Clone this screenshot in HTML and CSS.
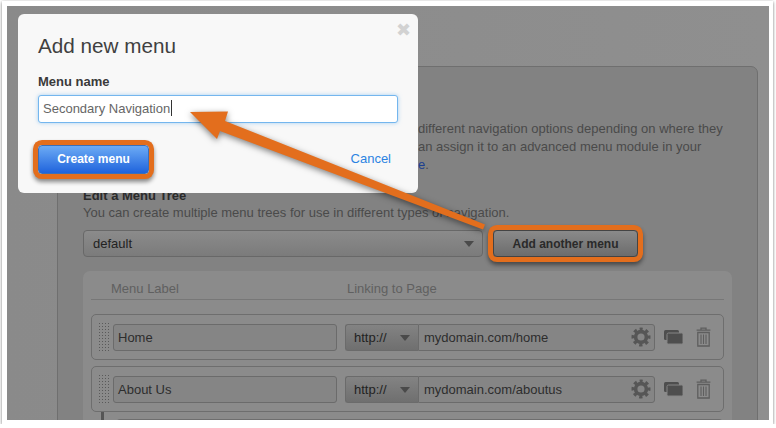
FILE: index.html
```html
<!DOCTYPE html>
<html>
<head>
  <title>Add new menu</title>
  <link rel="stylesheet" href="styles.css">
</head>
<body>
  <svg class="defs" width="0" height="0">
    <symbol id="gear" viewBox="0 0 20 20">
      <circle cx="10" cy="10" r="5.4" fill="none" stroke="#565656" stroke-width="3.6"/>
      <circle cx="10" cy="10" r="8" fill="none" stroke="#565656" stroke-width="3" stroke-dasharray="3.3 2.98" stroke-dashoffset="1.65" transform="rotate(-90 10 10)"/>
    </symbol>
    <symbol id="windows" viewBox="0 0 19 15">
      <rect x="0" y="0" width="15" height="10" rx="1.5" fill="#4e4e4e"/>
      <rect x="3" y="3" width="16" height="11" rx="1.5" fill="#4e4e4e" stroke="#858585"/>
    </symbol>
    <symbol id="trash" viewBox="0 0 15 20">
      <path d="M5 2.5V1.2h5v1.3M.6 3.2h13.8M1.8 5.5h11.4V19H1.8z" fill="none" stroke="#5e5e5e" stroke-width="1.3"/>
      <path d="M5 7.5v9.5M7.5 7.5v9.5M10 7.5v9.5" fill="none" stroke="#5e5e5e" stroke-width="1.1"/>
    </symbol>
  </svg>

  <div class="shot">
    <div class="screen">
      <div class="panel">
        <div class="intro">
          <div class="intro-line">different navigation options depending on where they</div>
          <div class="intro-line">an assign it to an advanced menu module in your</div>
          <div class="intro-line"><a class="doc-link" href="#">e</a>.</div>
        </div>

        <h3 class="tree-title">Edit a Menu Tree</h3>
        <p class="tree-help">You can create multiple menu trees for use in different types of navigation.</p>

        <div class="tree-controls">
          <div class="tree-select">default<span class="tri"></span></div>
          <button class="add-btn">Add another menu</button>
        </div>

        <div class="tree-box">
          <div class="tree-head">
            <span class="head-label">Menu Label</span>
            <span>Linking to Page</span>
          </div>

          <div class="tree-row">
            <span class="grip"></span>
            <div class="field label-field">Home</div>
            <div class="url-group">
              <div class="proto">http://<span class="tri"></span></div>
              <div class="url-field">mydomain.com/home<svg class="gear"><use href="#gear"/></svg></div>
            </div>
            <svg class="win-icon"><use href="#windows"/></svg>
            <svg class="trash-icon"><use href="#trash"/></svg>
          </div>

          <div class="tree-row">
            <span class="grip"></span>
            <div class="field label-field">About Us</div>
            <div class="url-group">
              <div class="proto">http://<span class="tri"></span></div>
              <div class="url-field">mydomain.com/aboutus<svg class="gear"><use href="#gear"/></svg></div>
            </div>
            <svg class="win-icon"><use href="#windows"/></svg>
            <svg class="trash-icon"><use href="#trash"/></svg>
          </div>

          <div class="tree-child">
            <div class="tree-row"></div>
          </div>
        </div>
      </div>

      <div class="modal">
        <span class="close">&#10006;</span>
        <h2 class="modal-title">Add new menu</h2>
        <label class="modal-label">Menu name</label>
        <div class="name-field">Secondary Navigation<span class="caret"></span></div>
        <div class="modal-foot">
          <button class="create-btn">Create menu</button>
          <a class="cancel" href="#">Cancel</a>
        </div>
      </div>
    </div>

    <svg class="arrow" width="776" height="428" viewBox="0 0 776 428">
      <polygon points="190,112 228,111.5 225,121 485,224.5 483,229.5 220,131 217,139" fill="#e36e1d"/>
    </svg>
  </div>
</body>
</html>
```

FILE: styles.css
```css
body {
  margin: 0;
  background-color: #fff;
  font-family: "Liberation Sans", Arial, sans-serif;
  font-size: 13px;
  color: #4a4a4a;
}

.defs {
  position: absolute;
}

.shot {
  width: 771px;
  height: 423px;
  margin-left: 2px;
  margin-top: 1px;
  padding: 5px 4px 4px 5px;
  box-sizing: border-box;
  background-color: #fff;
  box-shadow: 0 1px 3px rgba(0, 0, 0, 0.55);
}

.screen {
  position: relative;
  height: 414px;
  padding: 60px 11px 0 50px;
  box-sizing: border-box;
  overflow: hidden;
  background: linear-gradient(to right, #8a8a8a, #8f8f8f);
}

.panel {
  height: 420px;
  padding: 53px 25px 0 25px;
  border: 1px solid #6f6f6f;
  border-radius: 7px;
  background-color: #828282;
}

.intro {
  padding-left: 335px;
}

.intro-line {
  line-height: 18px;
  white-space: nowrap;
}

.doc-link {
  color: #1d3f8f;
  text-decoration: none;
}

.tree-title {
  margin: 13px 0 0;
  font-size: 13px;
  line-height: 17px;
  color: #2b2b2b;
}

.tree-help {
  margin: 0;
  line-height: 17px;
}

.tree-controls {
  display: flex;
  gap: 10px;
  margin-top: 9px;
}

.tree-select {
  position: relative;
  width: 400px;
  height: 27px;
  padding-left: 9px;
  box-sizing: border-box;
  border: 1px solid #686868;
  border-radius: 4px;
  background: linear-gradient(#8b8b8b, #7b7b7b);
  line-height: 25px;
  color: #222;
}

.tri {
  position: absolute;
  top: 10px;
  right: 8px;
  border-left: 5px solid transparent;
  border-right: 5px solid transparent;
  border-top: 6px solid #4a4a4a;
}

.add-btn {
  width: 145px;
  height: 27px;
  padding: 0;
  border: 1px solid #444;
  border-radius: 4px;
  background: linear-gradient(#8a8a8a, #6c6c6c);
  font-family: inherit;
  font-size: 12px;
  font-weight: bold;
  color: #2a2a2a;
  box-shadow: 0 0 0 5px #e36e1d, 0 3px 4px 5px rgba(0, 0, 0, 0.45);
}

.tree-box {
  margin-top: 14px;
  height: 160px;
  padding: 0 8px;
  border-radius: 7px;
  background-color: #8b8b8b;
}

.tree-head {
  display: flex;
  height: 28px;
  padding-left: 20px;
  border-bottom: 1px solid #777;
  line-height: 36px;
  color: #606060;
}

.head-label {
  width: 236px;
}

.tree-row {
  display: flex;
  align-items: center;
  height: 46px;
  margin-top: 6px;
  padding-left: 6px;
  box-sizing: border-box;
  border: 1px solid #6e6e6e;
  border-radius: 5px;
}

.tree-head + .tree-row {
  margin-top: 14px;
}

.grip {
  width: 12px;
  height: 31px;
  margin-right: 3px;
  background-image: radial-gradient(circle at 1.5px 1.5px, #5a5a5a 0.8px, transparent 1px);
  background-size: 3px 3px;
}

.field,
.url-field {
  height: 27px;
  padding-left: 4px;
  box-sizing: border-box;
  border: 1px solid #6b6b6b;
  border-radius: 3px;
  background-color: #858585;
  line-height: 25px;
  font-size: 13px;
  color: #2d2d2d;
}

.label-field {
  width: 224px;
  margin-right: 8px;
}

.url-group {
  display: flex;
  width: 310px;
}

.proto {
  position: relative;
  width: 73px;
  height: 27px;
  padding-left: 8px;
  box-sizing: border-box;
  border: 1px solid #6b6b6b;
  border-right: none;
  border-radius: 3px 0 0 3px;
  background: linear-gradient(#838383, #6f6f6f);
  line-height: 25px;
  color: #222;
}

.url-field {
  display: flex;
  align-items: center;
  justify-content: space-between;
  width: 237px;
  padding-left: 5px;
  padding-right: 3px;
  border-radius: 0 3px 3px 0;
}

.gear {
  width: 20px;
  height: 20px;
}

.win-icon {
  width: 19px;
  height: 15px;
  margin-left: 9px;
}

.trash-icon {
  width: 15px;
  height: 20px;
  margin-left: 13px;
}

.tree-child {
  margin-left: 10px;
  padding: 7px 0 0 11px;
  border-left: 3px solid #555;
}

.tree-child .tree-row {
  margin-top: 0;
}

.modal {
  position: absolute;
  left: 11px;
  top: 8px;
  width: 400px;
  height: 179px;
  padding: 18px 20px 0;
  box-sizing: border-box;
  border-radius: 6px;
  background-color: #f8f8f8;
}

.close {
  position: absolute;
  top: 7px;
  right: 7px;
  font-size: 18px;
  line-height: 18px;
  color: #d2d2d2;
}

.modal-title {
  margin: 0;
  font-size: 20.7px;
  font-weight: normal;
  line-height: 28px;
  color: #404040;
}

.modal-label {
  display: block;
  margin-top: 14px;
  font-size: 13px;
  font-weight: bold;
  line-height: 16px;
  color: #3a3a3a;
}

.name-field {
  display: flex;
  align-items: center;
  height: 28px;
  margin-top: 5px;
  padding: 0 0 2px 4px;
  box-sizing: border-box;
  border: 1px solid #74b6ee;
  border-radius: 3px;
  background-color: #fff;
  box-shadow: 0 0 4px rgba(116, 182, 238, 0.6);
  color: #666;
}

.caret {
  width: 1px;
  height: 16px;
  margin-left: 1px;
  background-color: #333;
}

.modal-foot {
  display: flex;
  align-items: center;
  justify-content: space-between;
  margin-top: 22px;
}

.create-btn {
  width: 111px;
  height: 29px;
  padding: 0 0 2px;
  border: 1px solid #3b6fb8;
  border-radius: 4px;
  background: linear-gradient(#6cabf5, #1f63dc);
  font-family: inherit;
  font-size: 12px;
  font-weight: bold;
  color: #fff;
  box-shadow: 0 0 0 5px #e36e1d, 0 3px 4px 5px rgba(0, 0, 0, 0.45);
}

.cancel {
  margin: 0 7px 2px 0;
  color: #2b83e2;
  text-decoration: none;
}

.arrow {
  position: absolute;
  left: 0;
  top: 0;
  filter: drop-shadow(0 2px 3px rgba(0, 0, 0, 0.5));
}
```
